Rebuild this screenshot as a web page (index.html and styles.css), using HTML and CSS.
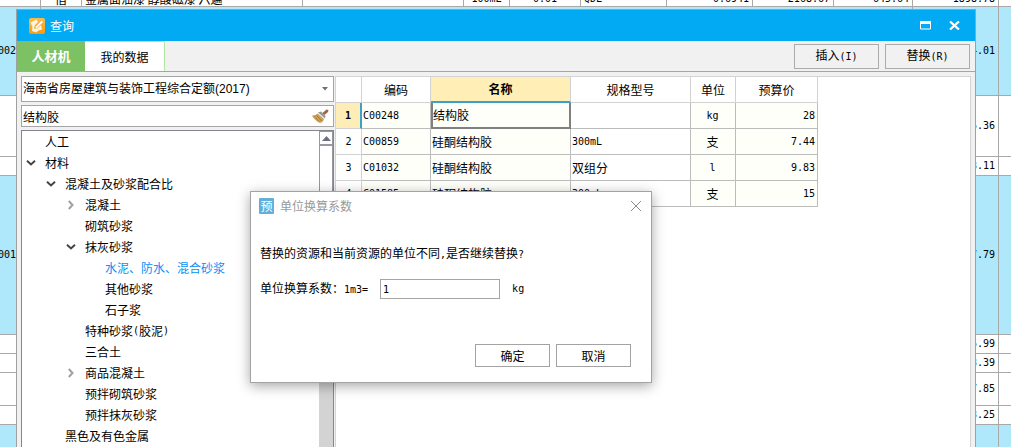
FILE: index.html
```html
<!DOCTYPE html>
<html lang="zh-CN">
<head>
<meta charset="utf-8">
<title>查询</title>
<link rel="stylesheet" href="styles.css">
</head>
<body>
<div class="backdrop">
<table class="sheet">
  <colgroup>
    <col class="s-code"><col class="s-kind"><col class="s-name"><col class="s-spec"><col class="s-unit"><col class="s-loss"><col class="s-qty"><col class="s-price"><col class="s-tax"><col class="s-cost"><col class="s-total"><col>
  </colgroup>
  <tbody>
    <tr class="h-s"><td></td><td class="mid">借</td><td>金属面油漆 醇酸磁漆 六遍</td><td></td><td class="num mid">100mL</td><td class="num mid">0.01</td><td class="num left">QDL</td><td class="num">0.6941</td><td class="num">2168.67</td><td class="num">645.64</td><td class="num">1898.78</td><td></td></tr>
    <tr class="h-l blue"><td class="num left">002</td><td colspan="9"></td><td class="num">4.01</td><td></td></tr>
    <tr class="h-m"><td></td><td colspan="9"></td><td class="num">5.36</td><td></td></tr>
    <tr class="h-s"><td></td><td colspan="9"></td><td class="num">3.11</td><td></td></tr>
    <tr class="h-xl blue"><td class="num left">001</td><td colspan="9"></td><td class="num">7.79</td><td></td></tr>
    <tr class="h-s"><td></td><td colspan="9"></td><td class="num">5.99</td><td></td></tr>
    <tr class="h-s"><td></td><td colspan="9"></td><td class="num">3.39</td><td></td></tr>
    <tr class="h-d"><td></td><td colspan="9"></td><td class="num">7.85</td><td></td></tr>
    <tr class="h-s"><td></td><td colspan="9"></td><td class="num">3.25</td><td></td></tr>
    <tr class="h-m blue"><td></td><td colspan="9"></td><td></td><td></td></tr>
  </tbody>
</table>
</div>

<section class="window" aria-label="查询">
  <header class="titlebar">
    <svg class="app-icon" viewBox="0 0 16 16" width="16" height="16" aria-hidden="true">
      <defs><linearGradient id="g1" x1="0" y1="0" x2="0" y2="1"><stop offset="0" stop-color="#fbb94d"/><stop offset="1" stop-color="#f79c0c"/></linearGradient></defs>
      <rect width="16" height="16" rx="2" fill="url(#g1)"/>
      <path d="M1.500 4.500 7.500 1.500 9 4 6 7 5 10.500 9 9.500 12 7 13 11.500Q9 12 7 14.500L3 13 3.500 9Z" fill="#fff3dc"/>
      <path d="M6.500 8.500 12.500 2.500 14.500 4 8.500 9.800 6 10.500Z" fill="#fff" stroke="#f3a63a" stroke-width=".6"/>
    </svg>
    <h1>查询</h1>
    <button class="win-btn" aria-label="最大化"><svg width="11" height="9" viewBox="0 0 11 9"><path d="M.5.5h10v7.500H.5Z" fill="none" stroke="#fff"/><path d="M0 0h11v3H0z" fill="#fff"/></svg></button>
    <button class="win-btn" aria-label="关闭"><svg width="11" height="9" viewBox="0 0 11 9"><path d="M1 .5 10 8.500M10 .5 1 8.500" fill="none" stroke="#fff" stroke-width="2.200"/></svg></button>
  </header>
  <nav class="tabs">
    <button class="tab tab-on">人材机</button>
    <button class="tab tab-off">我的数据</button>
    <span class="grow"></span>
    <button class="tool">插入<span class="lat">(I)</span></button>
    <button class="tool">替换<span class="lat">(R)</span></button>
  </nav>
  <div class="work">
    <aside class="side">
      <div class="combo">
        <select aria-label="定额库"><option>海南省房屋建筑与装饰工程综合定额(2017)</option></select>
        <svg width="6" height="4" viewBox="0 0 6 4" aria-hidden="true"><path d="M0 0h6L3 3.500Z" fill="#6e7078"/></svg>
      </div>
      <div class="search">
        <input type="text" value="结构胶" aria-label="搜索">
        <button class="clear" aria-label="清除">
          <svg width="17" height="15" viewBox="0 0 17 15"><path d="M10.500 4 14.500.5 16.500 1 16 3 12.500 6Z" fill="#a4633a"/><path d="M6 3.500 9 2.500 13.500 7 13 9.500Z" fill="#8d969c"/><path d="M6 4.500 12.500 10" stroke="#e9edf0" stroke-width="1.300"/><path d="M0 6.500Q4 6.500 5.500 4.500L12 10Q11 13.500 8 14 3 12 0 6.500Z" fill="#cf9f55"/><path d="M2.500 7 7.500 12.500M4.500 6.500 9.500 12" stroke="#8d6533" stroke-width=".8"/><path d="M3 6.500 8.500 12.500" stroke="#ecc982" stroke-width=".6"/></svg>
        </button>
      </div>
      <div class="tree-box">
        <ul class="tree">
          <li><div class="node"><i class="tog"></i>人工</div></li>
          <li><div class="node"><button class="tog open" aria-label="收起"><svg width="10" height="6" viewBox="0 0 10 6"><path d="M1 .8 5 4.500 9 .8"/></svg></button>材料</div>
            <ul>
              <li><div class="node"><button class="tog open" aria-label="收起"><svg width="10" height="6" viewBox="0 0 10 6"><path d="M1 .8 5 4.500 9 .8"/></svg></button>混凝土及砂浆配合比</div>
                <ul>
                  <li><div class="node"><button class="tog" aria-label="展开"><svg width="6" height="10" viewBox="0 0 6 10"><path d="M.8 1 4.500 5 .8 9"/></svg></button>混凝土</div></li>
                  <li><div class="node"><i class="tog"></i>砌筑砂浆</div></li>
                  <li><div class="node"><button class="tog open" aria-label="收起"><svg width="10" height="6" viewBox="0 0 10 6"><path d="M1 .8 5 4.500 9 .8"/></svg></button>抹灰砂浆</div>
                    <ul>
                      <li><div class="node current"><i class="tog"></i>水泥、防水、混合砂浆</div></li>
                      <li><div class="node"><i class="tog"></i>其他砂浆</div></li>
                      <li><div class="node"><i class="tog"></i>石子浆</div></li>
                    </ul>
                  </li>
                  <li><div class="node"><i class="tog"></i>特种砂浆<span class="lat">(</span>胶泥<span class="lat">)</span></div></li>
                  <li><div class="node"><i class="tog"></i>三合土</div></li>
                  <li><div class="node"><button class="tog" aria-label="展开"><svg width="6" height="10" viewBox="0 0 6 10"><path d="M.8 1 4.500 5 .8 9"/></svg></button>商品混凝土</div></li>
                  <li><div class="node"><i class="tog"></i>预拌砌筑砂浆</div></li>
                  <li><div class="node"><i class="tog"></i>预拌抹灰砂浆</div></li>
                </ul>
              </li>
              <li><div class="node"><i class="tog"></i>黑色及有色金属</div></li>
            </ul>
          </li>
        </ul>
        <div class="scroll">
          <button class="up" aria-label="向上滚动"><svg width="9" height="5" viewBox="0 0 9 5"><path d="M0 5 4.500 0 9 5Z" fill="#6b6f82"/></svg></button>
          <div class="thumb"></div>
        </div>
      </div>
    </aside>
    <div class="grid-box">
      <table class="grid">
        <colgroup><col class="g-no"><col class="g-code"><col class="g-name"><col class="g-spec"><col class="g-unit"><col class="g-price"></colgroup>
        <thead><tr><th></th><th>编码</th><th class="hot">名称</th><th>规格型号</th><th>单位</th><th>预算价</th></tr></thead>
        <tbody>
          <tr class="picked"><th class="num">1</th><td class="num left tint">C00248</td><td class="tint cell-on">结构胶</td><td></td><td class="num mid tint">kg</td><td class="num tint">28</td></tr>
          <tr><th class="num">2</th><td class="num left tint">C00859</td><td class="tint">硅酮结构胶</td><td class="num left">300mL</td><td class="mid tint">支</td><td class="num tint">7.44</td></tr>
          <tr><th class="num">3</th><td class="num left tint">C01032</td><td class="tint">硅酮结构胶</td><td>双组分</td><td class="num mid tint">l</td><td class="num tint">9.83</td></tr>
          <tr><th class="num">4</th><td class="num left tint">C01585</td><td class="tint">硅酮结构胶</td><td class="num left">300mL</td><td class="mid tint">支</td><td class="num tint">15</td></tr>
        </tbody>
      </table>
    </div>
  </div>
</section>

<section class="dialog" role="dialog" aria-labelledby="dlg-title">
  <header class="dlg-head">
    <span class="badge">预</span>
    <h2 id="dlg-title">单位换算系数</h2>
    <button class="dlg-close" aria-label="关闭"><svg width="12" height="12" viewBox="0 0 12 12"><path d="M1 1 11 11M11 1 1 11" stroke="#8c8c8c" fill="none"/></svg></button>
  </header>
  <p class="msg">替换的资源和当前资源的单位不同<span class="lat">,</span>是否继续替换<span class="lat">?</span></p>
  <div class="field">
    <label for="factor">单位换算系数：<span class="lat">1m3=</span></label>
    <input id="factor" type="text" value="1">
    <span class="lat">kg</span>
  </div>
  <footer class="actions"><button>确定</button><button>取消</button></footer>
</section>
</body>
</html>
```
FILE: styles.css
```css
* { box-sizing: border-box; }
html, body { height: 100%; }
body {
  margin: 0;
  position: relative;
  overflow: hidden;
  background: #fff;
  color: #000;
  font: 12px/14px "Noto Sans CJK SC", sans-serif;
}
button, input, select { font: inherit; color: inherit; margin: 0; padding: 0; border: 0; border-radius: 0; background: none; }
h1, h2, p, ul { margin: 0; padding: 0; font-size: 12px; font-weight: 400; list-style: none; }
svg { display: block; }
.lat, .num { font-family: "DejaVu Sans Mono", monospace; font-size: 10px; }
.grow { flex: 1; }

/* sheet behind the windows */
.backdrop { height: 100%; overflow: hidden; }
.sheet {
  width: calc(100% + 4px);
  margin: -12px 0 0 -2px;
  table-layout: fixed;
  border-spacing: 0;
}
.sheet td {
  padding: 0 3px;
  border: solid #a9a9a9;
  border-width: 0 1px 1px 0;
  overflow: hidden;
  white-space: nowrap;
}
.sheet .s-code { width: 43px; }
.sheet .s-kind { width: 41px; }
.sheet .s-name { width: 221px; }
.sheet .s-spec { width: 161px; }
.sheet .s-unit { width: 46px; }
.sheet .s-loss { width: 71px; }
.sheet .s-qty, .sheet .s-total { width: 86px; }
.sheet .s-price { width: 86px; }
.sheet .s-tax { width: 81px; }
.sheet .s-cost { width: 79px; }
.sheet td:first-child { padding-left: 0; }
.sheet tr:first-child td { vertical-align: bottom; }
.h-s { height: 19px; }
.h-d { height: 33px; }
.h-m { height: 61px; }
.h-l { height: 89px; }
.h-xl { height: 159px; }
.blue { background: #aee8fa; }
td.num { text-align: right; }
td.left { text-align: left; }
td.mid { text-align: center; }

/* query window */
.window {
  position: absolute;
  top: 9px; left: 16px; right: 35px; bottom: 0;
  display: flex;
  flex-direction: column;
  border: 1px solid #a0a0a0;
  border-bottom: 0;
  background: #f1f1f1;
}
.titlebar { display: flex; align-items: center; height: 31px; padding: 0 6px 0 12px; background: #02a9f3; color: #fff; }
.titlebar h1 { flex: 1; margin-left: 5px; }
.win-btn { display: grid; place-items: center; width: 29px; height: 31px; }
.tabs { display: flex; align-items: center; height: 31px; border-bottom: 1px solid #7dc567; padding-right: 5px; gap: 6px; }
.tab { align-self: stretch; }
.tab-on { width: 68px; margin-right: -6px; background: #7dc165; color: #fff; font-size: 13px; font-weight: 700; }
.tab-off { width: 80px; background: #fff; border: solid #b4e6a2; border-width: 1px 1px 0 0; }
.tool { width: 85px; height: 25px; border: 1px solid #ababab; }
.work { flex: 1; min-height: 0; display: flex; gap: 1px; padding: 4px 4px 0; }
.side { flex: 0 0 313px; display: flex; flex-direction: column; }
.combo, .search { display: flex; align-items: center; border: 1px solid #a5a5a5; background: #fff; }
.combo { height: 26px; margin-bottom: 3px; padding-right: 5px; }
.combo select { flex: 1; height: 24px; padding-left: 1px; appearance: none; outline: 0; font-family: "Liberation Sans", "Noto Sans CJK SC", sans-serif; }
.search { height: 22px; margin-bottom: 3px; padding-right: 4px; }
.search input { flex: 1; min-width: 0; height: 20px; padding-left: 1px; outline: 0; }
.tree-box { flex: 1; min-height: 0; display: flex; border: 1px solid #858592; border-bottom: 0; background: #fff; overflow: hidden; }
.tree { flex: 1; padding-left: 3px; }
.tree ul { padding-left: 20px; }
.node { display: flex; align-items: center; height: 21px; }
.tog { display: grid; place-items: center; width: 12px; height: 14px; margin-right: 8px; }
.tog path { fill: none; stroke: #a0a0a0; stroke-width: 2; }
.open path { stroke: #444; }
.current { color: #0a90f5; }
.scroll { width: 14px; background: #d3d3d3; }
.up { display: grid; place-items: center; width: 14px; height: 14px; border: 1px solid #98989f; background: #fff; }
.thumb { height: 58%; border: 1px solid #98989f; background: #fff; }
.grid-box { flex: 1; border: 1px solid #d4d4d4; border-bottom: 0; background: #fff; }
.grid { width: 482px; table-layout: fixed; border-spacing: 0; }
.grid .g-no { width: 26px; }
.grid .g-code { width: 69px; }
.grid .g-name { width: 140px; }
.grid .g-spec { width: 120px; }
.grid .g-unit { width: 45px; }
.grid .g-price { width: 82px; }
.grid tr { height: 26px; }
.grid th { padding: 0; font-weight: 400; border: solid #d2d2d2; border-width: 0 1px 1px 0; }
.grid td { padding: 0 2px 0 1px; border: solid #bcbcbc; border-width: 0 1px 1px 0; }
.grid .hot { background: #ffeeb5; border-bottom: 2px solid #3ca2cc; font-weight: 700; }
.grid .tint { background: #fffffa; }
.grid .picked th { background: #ffedb8; border-right: 2px solid #3ca2cc; font-weight: 700; }
.grid .cell-on { border: 2px solid #808080; border-top: 0; padding-left: 0; }

/* dialog */
.dialog {
  position: absolute;
  top: 191px; left: 250px;
  width: 402px;
  border: 1px solid #a3a3a3;
  background: #fff;
  box-shadow: 0 3px 12px rgba(0, 0, 0, .35);
}
.dlg-head { display: flex; align-items: center; height: 28px; padding: 0 9px 0 8px; }
.badge { width: 15px; height: 16px; border-radius: 1px; background: #62afdc; color: #fff; line-height: 16px; text-align: center; }
.dlg-head h2 { flex: 1; margin-left: 6px; color: #999; }
.msg { margin: 26px 9px 0; }
.field { display: flex; align-items: center; margin: 17px 9px 0; }
.field input { width: 120px; height: 20px; margin: 0 12px 0 12px; padding: 0 2px; border: 1px solid #a5a5a5; outline: 0; font-family: "DejaVu Sans Mono", monospace; font-size: 10px; }
.actions { display: flex; justify-content: flex-end; gap: 6px; padding: 45px 20px 15px; }
.actions button { width: 75px; height: 23px; border: 1px solid #a3a3a3; }
```
